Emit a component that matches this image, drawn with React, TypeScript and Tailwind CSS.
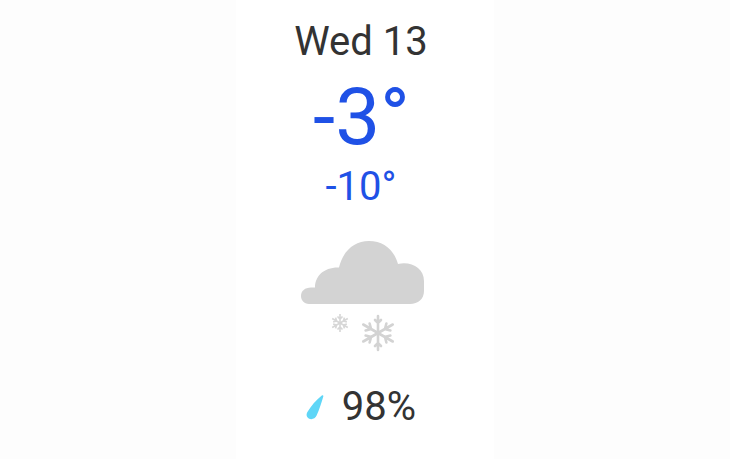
import React from 'react';

const SnowCloud: React.FC = () => (
  <svg width="124" height="114" viewBox="0 0 124 114" fill="#d3d3d3">
    <path d="M8 63C3 63 0 59 0 55C0 50 4 46.5 10 46.5H14C14 35 23 26 38 26.5C42 10 53 0 68 0C83 0 93 9 97 23C110 20 123 27 123 40V50C123 58 117 63 109 63Z" />
    <g stroke="#d3d3d3" strokeWidth="2.6" fill="none" strokeLinecap="round">
      <g transform="translate(77 92)">
        <path d="M0 -17V17M-3 -13L0 -10L3 -13M-3 13L0 10L3 13" />
        <path transform="rotate(60)" d="M0 -17V17M-4 -12L0 -8L4 -12M-4 12L0 8L4 12" />
        <path transform="rotate(120)" d="M0 -17V17M-4 -12L0 -8L4 -12M-4 12L0 8L4 12" />
      </g>
    </g>
    <g stroke="#d3d3d3" strokeWidth="1.6" fill="none" opacity="0.9" transform="translate(39 82)">
      <path d="M0 -9V9M-2.5 -6.5L0 -4L2.5 -6.5M-2.5 6.5L0 4L2.5 6.5" />
      <path transform="rotate(60)" d="M0 -9V9M-2.5 -6.5L0 -4L2.5 -6.5M-2.5 6.5L0 4L2.5 6.5" />
      <path transform="rotate(120)" d="M0 -9V9M-2.5 -6.5L0 -4L2.5 -6.5M-2.5 6.5L0 4L2.5 6.5" />
    </g>
  </svg>
);

const Drop: React.FC = () => (
  <svg width="18" height="25" viewBox="0 0 18 25" fill="#5fd6f7">
    <path d="M15.8 0.6C16.7 -0.1 17.6 0.4 17.3 1.5C15.6 7.5 13.5 14 10.6 20.6C9.3 23.6 6 24.8 3.2 23.8C0.6 22.6 -0.2 19.6 1.4 17C4.8 11.5 10 5 15.8 0.6Z" />
  </svg>
);

const App: React.FC = () => {
  return (
    <div className="h-[459px] w-[730px] flex justify-center overflow-hidden bg-[#fdfdfd] font-['Roboto',sans-serif]">
      <div className="w-[258px] pr-[8px] bg-white flex flex-col items-center">
        <div className="mt-[20px] h-[44px] leading-[44px] text-[40px] text-[#333333]">Wed 13</div>
        <div className="mt-[10px] ml-[1px] h-[86px] leading-[86px] text-[80px] text-[#1f51e6]">-3°</div>
        <div className="mt-[5px] h-[44px] leading-[44px] text-[40px] text-[#1f51e6]">-10°</div>
        <div className="mt-[32px] ml-[4px]">
          <SnowCloud />
        </div>
        <div className="mt-[30px] flex items-center gap-[18px]">
          <Drop />
          <span className="h-[44px] leading-[44px] text-[40px] text-[#333333]">98%</span>
        </div>
      </div>
    </div>
  );
};

export default App;
